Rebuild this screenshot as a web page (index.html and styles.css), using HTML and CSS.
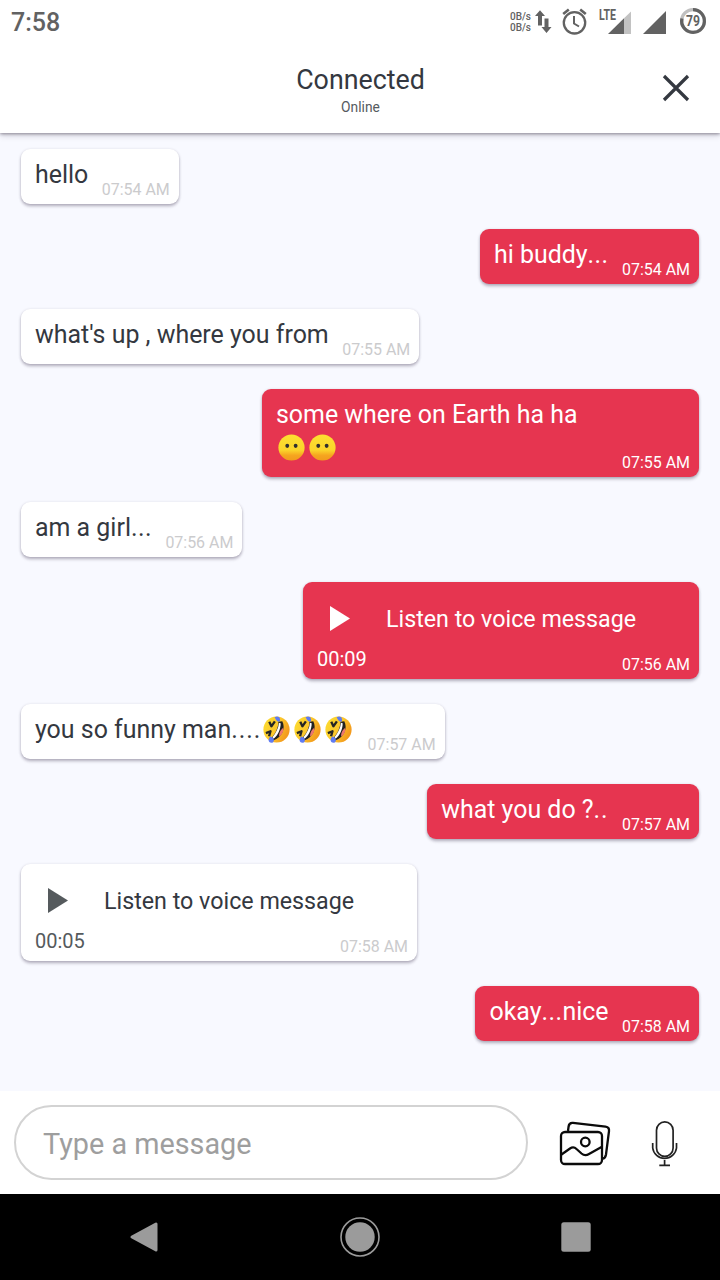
FILE: index.html
```html
<!DOCTYPE html>
<html lang="en">
<head>
<meta charset="utf-8">
<title>Chat</title>
<link rel="stylesheet" href="styles.css">
</head>
<body>
<svg class="defs" width="0" height="0">
  <defs>
    <linearGradient id="face" x1="0" y1="0" x2="0" y2="1">
      <stop offset="0" stop-color="#fde030"/><stop offset=".6" stop-color="#fbd52b"/><stop offset=".8" stop-color="#f6a51f"/><stop offset="1" stop-color="#f19a1d"/>
    </linearGradient>
    <linearGradient id="tilted" x1="0" y1="0" x2="1" y2=".5">
      <stop offset="0" stop-color="#fde030"/><stop offset=".6" stop-color="#fbc52b"/><stop offset="1" stop-color="#f39a1d"/>
    </linearGradient>
    <symbol id="mute" viewBox="0 0 28 28">
      <circle cx="14" cy="14" r="13.600" fill="url(#face)"/>
      <ellipse cx="9.600" cy="12.200" rx="2" ry="2.200" fill="#2f2f2f"/><ellipse cx="18.300" cy="12.200" rx="2" ry="2.200" fill="#2f2f2f"/>
    </symbol>
    <symbol id="rofl" viewBox="0 0 28 28">
      <circle cx="14" cy="14" r="13.600" fill="url(#tilted)"/>
      <path d="M16 6L20 5.500C23.500 12 20.500 22 10.500 25.500L9 22.500C13 18.500 15.800 12 16 6Z" fill="#222"/>
      <path d="M16.500 7L18.300 7.500C18.500 13.500 15 21 11 23.500L9.800 22C13.700 17.500 16 12.500 16.500 7Z" fill="#fff"/>
      <path d="M20.800 12.500C21.800 15.500 20 19.300 16.800 21.300C16.300 18.300 18 14.300 20.800 12.500Z" fill="#ed7770"/>
      <path d="M6.500 6L8.700 10.700L12.300 5.500M3 17.800L7.800 15.800L6.300 21" fill="none" stroke="#252525" stroke-width="2.400" stroke-linejoin="round"/>
      <path d="M12 1.300C15 -.5 18 .8 17.700 4.500C17.300 7.200 14.500 6.500 12 1.300Z" fill="#5f7bf2"/>
      <path d="M7.500 21.200C11 22 12.800 25.800 9.700 27.700C5.500 28.300 4.500 24.500 7.500 21.200Z" fill="#5f7bf2"/>
    </symbol>
    <symbol id="play" viewBox="0 0 20 25"><path d="M0 0L20 12.500L0 25Z" fill="currentColor"/></symbol>
  </defs>
</svg>
<div class="screen">
  <header class="top">
    <div class="status">
      <span class="clock">7:58</span>
      <svg class="status-icons" width="220" height="45" viewBox="500 0 220 45">
        <g fill="#626262">
          <text class="rate" x="510" y="20" textLength="21">0B/s</text>
          <text class="rate" x="510" y="31" textLength="21">0B/s</text>
          <path d="M540 10.300L545 16H542V25.500H538V16H535Z"/>
          <path d="M544.500 18.500H548.500V27H551.500L546.500 33L541.500 27H544.500Z"/>
          <text class="lte" x="599" y="20" textLength="17" lengthAdjust="spacingAndGlyphs">LTE</text>
          <path d="M608 34L624 18.300V34Z"/>
          <path d="M624 18.300L631 11.500V34H624Z" fill="#c2c2c2"/>
          <path d="M643 34L666 11V34Z"/>
          <text class="battery" x="686" y="26" textLength="14" lengthAdjust="spacingAndGlyphs">79</text>
        </g>
        <g fill="none" stroke="#626262" stroke-width="2.300">
          <circle cx="574.500" cy="22.800" r="10.700"/>
          <path d="M574 16V23.500L579 26.500" stroke-width="2"/>
          <path d="M563.200 14L568.800 9.400M580.200 9.400L585.800 14" stroke-width="2.600"/>
          <circle cx="693" cy="21" r="11.400" stroke="#c0c0c0" stroke-width="3.200"/>
          <path d="M693 9.600A11.400 11.400 0 1 1 681.900 18.500" stroke-width="3.200"/>
        </g>
      </svg>
    </div>
    <div class="title-row">
      <div class="titles">
        <h1 class="title">Connected</h1>
        <div class="online">Online</div>
      </div>
      <svg class="close" width="28" height="28" viewBox="0 0 28 28"><path d="M2 2L26 26M26 2L2 26" stroke="#343840" stroke-width="3.200"/></svg>
    </div>
  </header>

  <main class="chat">
    <div class="bubble in"><p class="text">hello</p><time class="time">07:54 AM</time></div>
    <div class="bubble out"><p class="text">hi buddy<span class="dots">...</span></p><time class="time">07:54 AM</time></div>
    <div class="bubble in"><p class="text">what's up , where you from</p><time class="time">07:55 AM</time></div>
    <div class="bubble out multi">
      <p class="text">some where on Earth ha ha<span class="emojis"><svg class="emoji"><use href="#mute"/></svg><svg class="emoji"><use href="#mute"/></svg></span></p>
      <time class="time">07:55 AM</time>
    </div>
    <div class="bubble in"><p class="text">am a girl<span class="dots">...</span></p><time class="time">07:56 AM</time></div>
    <div class="bubble out voice">
      <div class="player"><svg class="play"><use href="#play"/></svg><span class="listen">Listen to voice message</span></div>
      <div class="meta"><span class="length">00:09</span><time class="time">07:56 AM</time></div>
    </div>
    <div class="bubble in"><p class="text">you so funny man<span class="dots wide">....</span><svg class="emoji"><use href="#rofl"/></svg><svg class="emoji"><use href="#rofl"/></svg><svg class="emoji"><use href="#rofl"/></svg></p><time class="time">07:57 AM</time></div>
    <div class="bubble out"><p class="text">what you do ?<span class="dots wide">..</span></p><time class="time">07:57 AM</time></div>
    <div class="bubble in voice">
      <div class="player"><svg class="play"><use href="#play"/></svg><span class="listen">Listen to voice message</span></div>
      <div class="meta"><span class="length">00:05</span><time class="time">07:58 AM</time></div>
    </div>
    <div class="bubble out"><p class="text">okay<span class="dots">...</span>nice</p><time class="time">07:58 AM</time></div>
  </main>

  <footer class="composer">
    <div class="field">Type a message</div>
    <svg class="gallery" width="52" height="46" viewBox="559 1121 52 46" fill="none" stroke="#0b0b0b" stroke-width="2.300" stroke-linejoin="round">
      <path d="M568 1131L568.600 1126.500Q569.100 1122.500 573 1122.900L605.500 1126.700Q609.500 1127.300 609 1131.200L606 1154.500Q605.300 1158.500 602.500 1158.500"/>
      <rect x="561" y="1132" width="41" height="32" rx="4"/>
      <circle cx="585.300" cy="1142" r="4.300"/>
      <path d="M561.500 1154.500L570 1148.500Q573.500 1146 576.500 1149L581.500 1153.500Q585 1156.500 589 1154L601.500 1147"/>
    </svg>
    <svg class="mic" width="28" height="46" viewBox="651 1121 28 46" fill="none" stroke="#222" stroke-width="1.700">
      <rect x="656.500" y="1121.900" width="16.600" height="34.500" rx="8.300"/>
      <path d="M652.700 1143V1148A12 12 0 0 0 676.500 1148V1143M664.600 1160V1165M659.300 1165.300H670"/>
    </svg>
  </footer>
  <nav class="nav">
    <svg width="720" height="86" viewBox="0 1194 720 86" fill="#9b9b9b">
      <path d="M132 1237L156 1224V1250Z" stroke="#9b9b9b" stroke-width="3" stroke-linejoin="round"/>
      <circle cx="360" cy="1237" r="14.700"/><circle cx="360" cy="1237" r="19" fill="none" stroke="#9b9b9b" stroke-width="1.600"/>
      <rect x="561.300" y="1222.300" width="29.400" height="29.400" rx="2.500"/>
    </svg>
  </nav>
</div>
</body>
</html>
```
FILE: styles.css
```css
* { box-sizing: border-box; }
body { margin: 0; font-family: Roboto, "Liberation Sans", sans-serif; background: #f8f9ff; }
.defs { position: absolute; }
.screen { width: 720px; height: 1280px; display: flex; flex-direction: column; overflow: hidden; }

.top { height: 133px; background: #fff; box-shadow: 0 1px 3px rgba(40, 30, 50, .45), 0 3px 6px rgba(40, 30, 50, .15); z-index: 1; }
.status { height: 45px; display: flex; justify-content: space-between; padding-left: 11px; }
.clock { font-size: 25px; line-height: 46px; font-weight: 500; color: #626262; }
.rate { font-size: 10px; font-weight: 500; }
.lte { font-size: 14px; font-weight: 700; }
.battery { font-size: 14px; font-weight: 700; }
.title-row { height: 88px; display: grid; grid-template-columns: 60px 1fr 60px; }
.titles { grid-column: 2; text-align: center; padding: 18px 0 0 1px; }
.title { margin: 0; font-size: 26.800px; line-height: 34px; font-weight: 400; color: #343840; }
.online { font-size: 13.800px; line-height: 20px; color: #555a60; }
.close { margin: 29px 0 0 2px; }

.chat { flex: 1; padding: 16px 21px 0; display: flex; flex-direction: column; align-items: flex-start; gap: 25px; }
.bubble { display: flex; align-items: flex-end; height: 55px; padding: 0 9px 0 14px; border-radius: 9px; box-shadow: 0 1px 3px rgba(40, 30, 60, .3), 0 3px 3px rgba(40, 30, 60, .14); white-space: nowrap; }
.in { background: #fff; color: #343840; }
.out { background: #e63550; color: #fff; align-self: flex-end; }
.text { margin: 0 13.500px 0 0; align-self: flex-start; font-size: 24.950px; line-height: 33px; padding-top: 9px; }
.dots { letter-spacing: .4px; }
.wide { letter-spacing: .9px; }
.time { font-size: 15.950px; line-height: 20px; padding-bottom: 4px; height: 24px; }
.in .time { color: #cbcbcd; }
.multi { width: 437px; height: 88px; }
.multi .time { margin-left: auto; }
.emojis { display: block; height: 33px; }
.emoji { width: 27px; height: 27px; margin: 0 2px; vertical-align: -5px; }
.voice { width: 396px; height: 97px; flex-direction: column; align-items: stretch; justify-content: space-between; }
.player { display: flex; align-items: center; padding: 21px 0 0 13px; }
.play { width: 20px; height: 25px; margin-top: -2px; }
.in .play, .in .length { color: #555a5d; }
.listen { font-size: 23.250px; line-height: 32px; margin-left: 36px; }
.meta { display: flex; justify-content: space-between; align-items: flex-end; }
.length { font-size: 20px; line-height: 24px; padding-bottom: 8px; }

.composer { height: 103px; background: #fff; display: flex; align-items: center; padding: 0 41px 0 14px; }
.field { width: 514px; height: 75px; border: 2px solid #d3d3d3; border-radius: 38px; padding-left: 27px; font-size: 28.800px; line-height: 75px; color: #9e9e9e; }
.gallery { margin-left: 31px; margin-top: 3px; }
.mic { margin-left: 40px; margin-top: 3px; }
.nav { height: 86px; background: #000; }
.nav svg { display: block; }
```
